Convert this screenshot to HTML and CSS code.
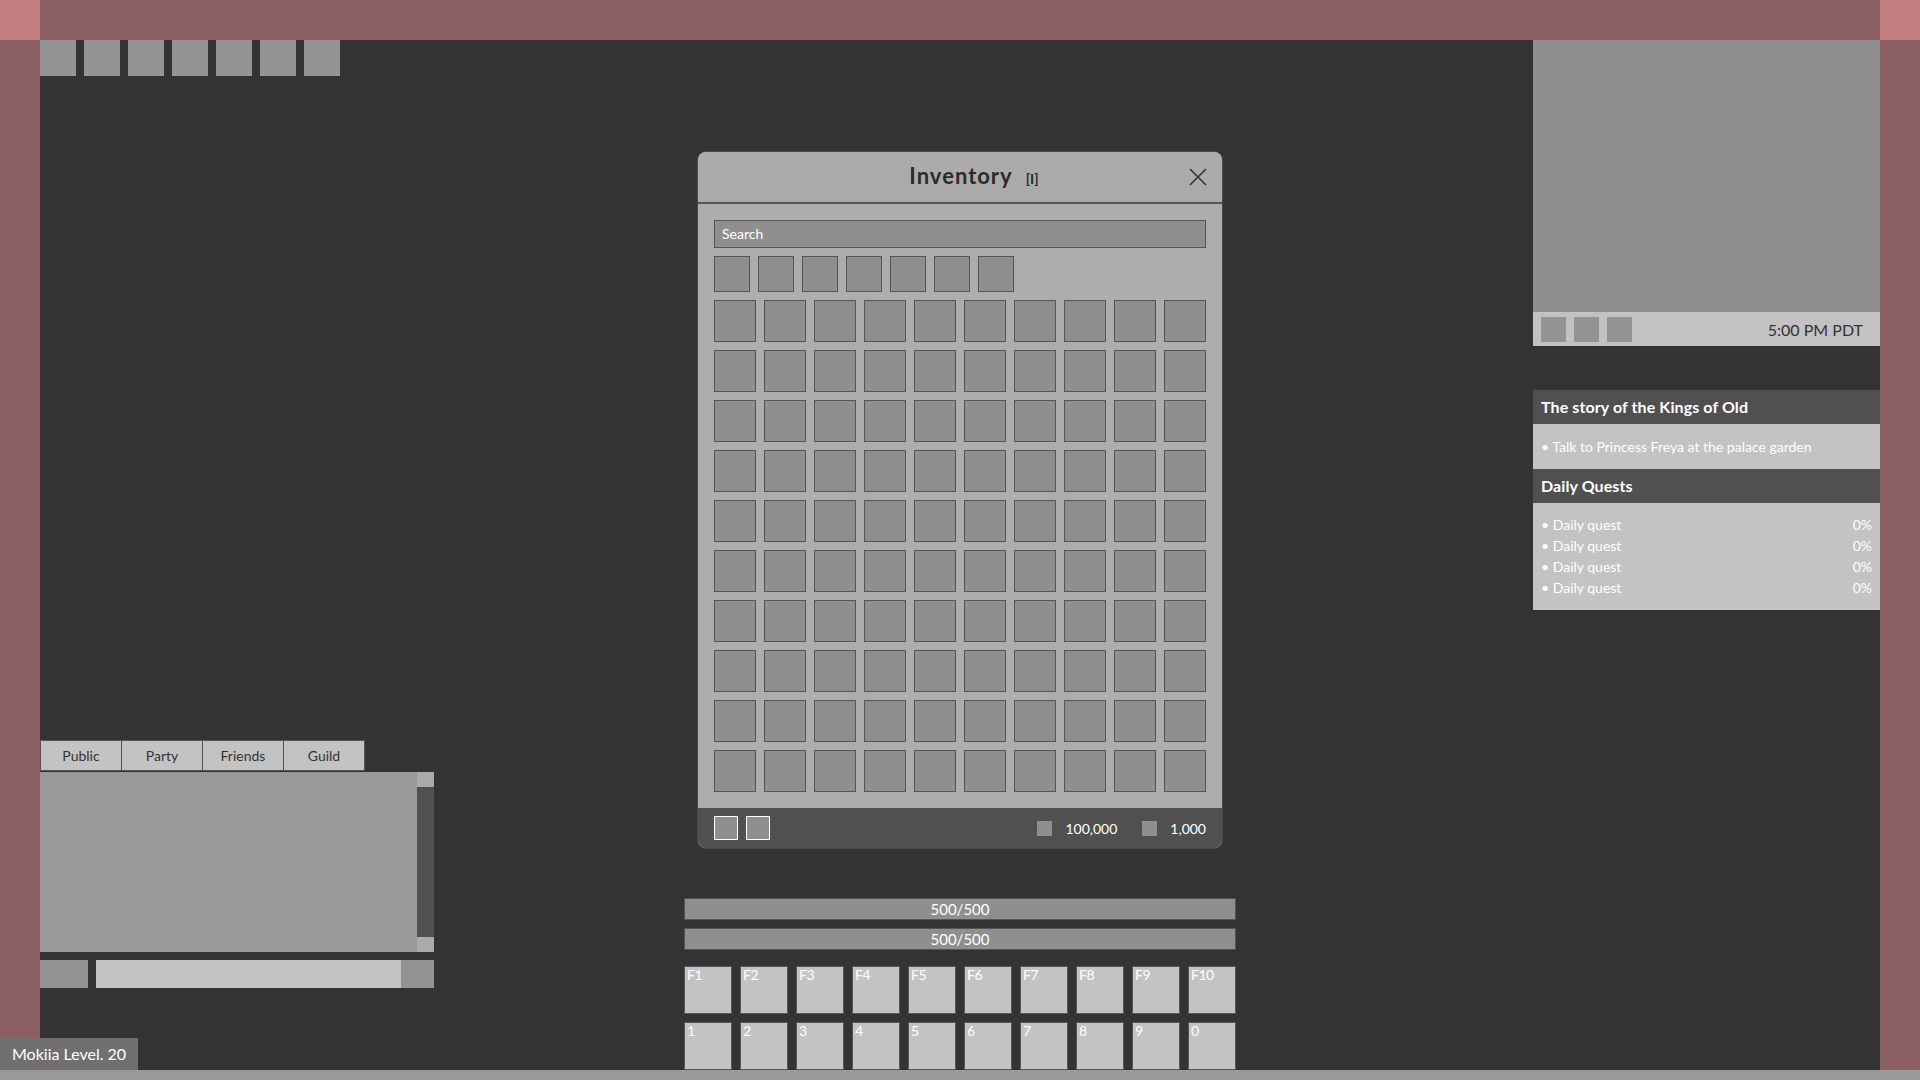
FILE: index.html
```html
<!DOCTYPE html>
<html lang="en">
<head>
<meta charset="utf-8">
<title>Game HUD</title>
<link rel="stylesheet" href="styles.css">
</head>
<body>
<div class="corner corner-tl"></div>
<div class="frame frame-top"></div>
<div class="corner corner-tr"></div>
<div class="frame frame-left"></div>

<main class="stage">
  <div class="quickbar">
    <span class="qslot"></span><span class="qslot"></span><span class="qslot"></span><span class="qslot"></span><span class="qslot"></span><span class="qslot"></span><span class="qslot"></span>
  </div>

  <aside class="right-col">
    <div class="minimap">
      <div class="map"></div>
      <div class="map-bar">
        <span class="mslot"></span><span class="mslot"></span><span class="mslot"></span>
        <span class="time">5:00 PM PDT</span>
      </div>
    </div>
    <section class="quests">
      <h2 class="quest-head">The story of the Kings of Old</h2>
      <div class="quest-body single">
        <div class="qline"><span>• Talk to Princess Freya at the palace garden</span></div>
      </div>
      <h2 class="quest-head">Daily Quests</h2>
      <div class="quest-body">
        <div class="qline"><span>• Daily quest</span><span>0%</span></div>
        <div class="qline"><span>• Daily quest</span><span>0%</span></div>
        <div class="qline"><span>• Daily quest</span><span>0%</span></div>
        <div class="qline"><span>• Daily quest</span><span>0%</span></div>
      </div>
    </section>
  </aside>

  <section class="chat">
    <div class="tabs">
      <button class="tab">Public</button>
      <button class="tab">Party</button>
      <button class="tab">Friends</button>
      <button class="tab">Guild</button>
    </div>
    <div class="chat-box">
      <div class="chat-log"></div>
      <div class="scrollbar">
        <span class="sb-end"></span><span class="sb-thumb"></span><span class="sb-end"></span>
      </div>
    </div>
    <div class="chat-input-row">
      <span class="channel"></span>
      <span class="chat-input"></span>
      <span class="send"></span>
    </div>
  </section>

  <section class="inventory">
    <header class="inv-head">
      <h1 class="inv-title">Inventory<span class="hotkey">[I]</span></h1>
      <button class="close" aria-label="Close">
        <svg width="18" height="18" viewBox="0 0 18 18"><path d="M1 1 L17 17 M17 1 L1 17" stroke="#333" stroke-width="1.6" fill="none"/></svg>
      </button>
    </header>
    <div class="inv-body">
      <div class="search">Search</div>
      <div class="filters">
        <span class="fslot"></span><span class="fslot"></span><span class="fslot"></span><span class="fslot"></span><span class="fslot"></span><span class="fslot"></span><span class="fslot"></span>
      </div>
      <div class="grid" id="grid"></div>
    </div>
    <footer class="inv-foot">
      <span class="fbtn"></span><span class="fbtn"></span>
      <div class="coins">
        <span class="coin"></span><span class="amount a1">100,000</span>
        <span class="coin"></span><span class="amount">1,000</span>
      </div>
    </footer>
  </section>

  <section class="bottom-hud">
    <div class="bar">500/500</div>
    <div class="bar">500/500</div>
    <div class="hotbar">
      <div class="hslot">F1</div><div class="hslot">F2</div><div class="hslot">F3</div><div class="hslot">F4</div><div class="hslot">F5</div><div class="hslot">F6</div><div class="hslot">F7</div><div class="hslot">F8</div><div class="hslot">F9</div><div class="hslot">F10</div>
      <div class="hslot">1</div><div class="hslot">2</div><div class="hslot">3</div><div class="hslot">4</div><div class="hslot">5</div><div class="hslot">6</div><div class="hslot">7</div><div class="hslot">8</div><div class="hslot">9</div><div class="hslot">0</div>
    </div>
  </section>
</main>

<div class="frame frame-right"></div>
<div class="frame-bottom"></div>
<div class="level">Mokiia Level. 20</div>

<script>
  var g = document.getElementById('grid');
  for (var i = 0; i < 100; i++) { var c = document.createElement('span'); c.className = 'cell'; g.appendChild(c); }
</script>
</body>
</html>
```
FILE: styles.css
```css
* { box-sizing: border-box; }
html, body { margin: 0; padding: 0; }
body {
  width: 1920px;
  height: 1080px;
  overflow: hidden;
  background: #333333;
  font-family: Lato, "Open Sans", sans-serif;
  display: grid;
  grid-template-columns: 40px 1fr 40px;
  grid-template-rows: 40px 1fr 10px;
  position: relative;
}
.corner { background: #c27e7f; }
.frame { background: #8c6063; }
.frame-bottom { grid-column: 1 / 4; background: #999999; }

.stage { position: relative; background: #333333; }

.quickbar { display: flex; gap: 8px; position: absolute; left: 0; top: 0; }
.qslot { width: 36px; height: 36px; background: #939393; }

/* right column */
.right-col { position: absolute; right: 0; top: 0; width: 347px; display: flex; flex-direction: column; gap: 44px; }
.map { height: 272px; background: #8f8f8f; }
.map-bar { height: 34px; background: #c2c2c2; display: flex; align-items: center; gap: 8px; padding: 0 17px 0 8px; }
.mslot { width: 25px; height: 25px; background: #939393; }
.time { margin-left: auto; font-size: 16px; color: #333; }

.quest-head { margin: 0; height: 34px; background: #505050; color: #fff; font-size: 16px; font-weight: 700; line-height: 34px; padding: 0 8px; letter-spacing: 0.1px; }
.quest-body { background: #c3c3c3; padding: 11px 8px 12px; }
.quest-body.single { padding: 12px 8px; height: 45px; }
.qline { display: flex; justify-content: space-between; color: #fff; font-size: 14px; line-height: 21px; }

/* chat */
.chat { position: absolute; left: 0; top: 700px; width: 394px; }
.tabs { display: flex; }
.tab {
  width: 82px; height: 31px; margin: 0 0 0 -1px; padding: 0;
  background: #c3c3c3; border: 1px solid #555; color: #333;
  font-family: Lato, sans-serif; font-size: 14px;
}
.tab:first-child { margin-left: 0; }
.chat-box { display: flex; height: 180px; margin-top: 1px; }
.chat-log { flex: 1; background: #999999; }
.scrollbar { width: 17px; display: flex; flex-direction: column; }
.sb-end { height: 15px; background: #aaaaaa; }
.sb-thumb { flex: 1; background: #505050; }
.chat-input-row { display: flex; height: 28px; margin-top: 8px; }
.channel { width: 48px; background: #939393; margin-right: 8px; }
.chat-input { flex: 1; background: #c3c3c3; }
.send { width: 33px; background: #939393; }

/* inventory */
.inventory {
  position: absolute; left: 658px; top: 112px; width: 524px;
  background: #adadad; border-radius: 8px;
  box-shadow: 0 0 0 1px #4a4a4a;
  overflow: hidden;
}
.inv-head { position: relative; height: 52px; background: #ababab; border-bottom: 2px solid #555; display: flex; align-items: center; justify-content: center; }
.inv-title { margin: 0; padding-left: 28px; font-size: 22px; font-weight: 700; color: #2b2b2b; letter-spacing: 1px; line-height: 28px; }
.hotkey { margin-left: 13px; font-size: 14px; font-weight: 700; letter-spacing: 0; }
.close { position: absolute; right: 15px; top: 16px; width: 18px; height: 18px; padding: 0; border: 0; background: none; display: block; }
.close svg { display: block; }
.inv-body { padding: 16px; }
.search { height: 28px; background: #8f8f8f; border: 1px solid #555; color: #fff; font-size: 14px; line-height: 26px; padding-left: 7px; }
.filters { display: flex; gap: 8px; margin-top: 8px; }
.fslot { width: 36px; height: 36px; background: #8f8f8f; border: 1px solid #555; }
.grid { display: grid; grid-template-columns: repeat(10, 42px); grid-auto-rows: 42px; gap: 8px; margin-top: 8px; }
.cell { background: #8f8f8f; border: 1px solid #555; }
.inv-foot { height: 40px; background: #505050; display: flex; align-items: center; gap: 8px; padding: 0 16px; }
.fbtn { width: 24px; height: 24px; background: #8f8f8f; border: 1px solid #fff; }
.coins { margin-left: auto; display: flex; align-items: center; color: #fff; font-size: 14px; }
.coin { width: 15px; height: 15px; background: #8f8f8f; margin-right: 13px; }
.amount.a1 { margin-right: 25px; }

/* bottom hud */
.bottom-hud { position: absolute; left: 644px; top: 858px; width: 552px; display: flex; flex-direction: column; gap: 8px; }
.bar { height: 22px; background: #8f8f8f; border: 1px solid #555; color: #fff; font-size: 15px; line-height: 20px; text-align: center; }
.hotbar { display: grid; grid-template-columns: repeat(10, 48px); grid-auto-rows: 48px; gap: 8px; margin-top: 8px; }
.hslot { background: #c3c3c3; border: 1px solid #555; color: #fff; font-size: 14px; line-height: 15px; padding: 0 0 0 2px; letter-spacing: -0.5px; }

.level {
  position: absolute; left: 0; bottom: 10px; width: 138px; height: 32px;
  background: #707070; color: #fff; font-size: 16px; line-height: 32px; padding-left: 12px;
}
```
